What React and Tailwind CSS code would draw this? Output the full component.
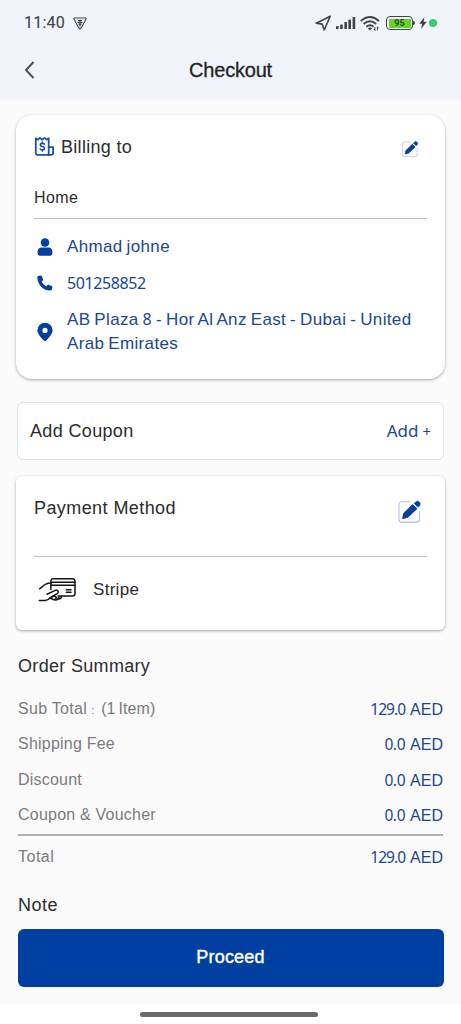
import React from "react";

const summaryRows = [
  { label: "Shipping Fee", amount: "0.0" },
  { label: "Discount", amount: "0.0" },
  { label: "Coupon & Voucher", amount: "0.0" },
];

const EditIcon = ({ className }) => (
  <svg viewBox="0 0 24 24" className={className} fill="none">
    <path
      d="M13 2.6H4.5A2.6 2.6 0 0 0 1.9 5.2V19.6A2.6 2.6 0 0 0 4.5 22.2H19A2.6 2.6 0 0 0 21.6 19.6V11.5"
      stroke="#aebfea"
      strokeWidth="1"
    />
    <path d="M5.6 18.6L6.5 14.2L15 5.7L18.7 9.3L10.2 17.4Z" fill="#0340a0" stroke="#0340a0" strokeWidth="1.2" strokeLinejoin="round" />
    <path d="M16.6 4.2L18.3 2.6Q19.8 1.4 21.5 3Q23 4.7 21.7 6.2L20.1 7.8Z" fill="#0340a0" stroke="#0340a0" strokeWidth="0.8" strokeLinejoin="round" />
  </svg>
);

const BillIcon = () => (
  <svg viewBox="0 0 20 20" className="h-[21px] w-[21px]" fill="none" stroke="#1b4fa8" strokeWidth="1.7" strokeLinejoin="round" strokeLinecap="round">
    <path d="M1.7 2.2L3.7 3.5L5.6 1.8L7.8 3.5L10 1.8L12 3.5L14 2.2V18H3.5A1.8 1.8 0 0 1 1.7 16.2Z" />
    <path d="M14 10.5H18.2V16.2A1.8 1.8 0 0 1 16.4 18H14" />
    <path d="M10 7.8Q9.4 7 7.9 7Q6 7 6 8.5Q6 9.8 7.9 10Q10 10.3 10 11.8Q10 13.2 7.9 13.2Q6.4 13.2 5.8 12.3M7.9 5.8V7M7.9 13.2V14.4" strokeWidth="1.5" />
  </svg>
);

const CardHandIcon = () => (
  <svg viewBox="0 0 38 24" className="h-6 w-[38px]" fill="none" stroke="#151515" strokeWidth="1.5" strokeLinecap="round" strokeLinejoin="round">
    <path d="M12.9 11.5V2.7A2.4 2.4 0 0 1 15.3.8H34.6A2.4 2.4 0 0 1 37 2.9V15.6A2.4 2.4 0 0 1 34.6 17.9H20" />
    <path d="M12.9 4.3H37M12.9 7.3H37M28.3 11.8H33M28.3 14.3H33" />
    <path d="M12.6 5Q8.8 5 6.3 7L1.6 10.8M1.3 22.5H7.2Q10.3 22.2 12.2 19.8L19.5 15.3Q21.3 13.5 19.4 12.3Q18.2 11.7 16.7 12.6L9 16.2" />
    <path d="M12 20L15.8 21.8Q17.8 21.8 18.5 19.5M16.4 21.8Q20 22.6 21 19.3M20.5 21Q23.6 21 23.6 18.3M13.4 19L16 17.8L18 19" />
  </svg>
);

const StatusBar = () => (
  <div className="flex h-[46px] items-center pl-6 pr-6">
    <span className="font-['Roboto',sans-serif] text-[16px] leading-5 tracking-[0.25px] text-[#414246] [-webkit-text-stroke:0.1px]">11:40</span>
    <svg viewBox="0 0 14 13" className="ml-[8px] h-[13px] w-[14px]" fill="none" stroke="#414246">
      <path d="M1.4 1H12.6Q13.4 1 13.1 2L8 11.2Q7 12.5 6 11.2L.9 2Q.6 1 1.4 1Z" strokeWidth="1.1" />
      <path d="M5 3.5H9M4.5 5.3H9.5M5.5 7.2H8.5M7 2.8V9.5" strokeWidth="1.2" />
    </svg>
    <div className="ml-auto flex items-center">
      <svg viewBox="0 0 17 16" className="h-4 w-[17px]" fill="none" stroke="#414246" strokeWidth="1.6" strokeLinejoin="round">
        <path d="M15.2 1.2L1.2 8.2L7.2 9.1L9.2 15Z" />
      </svg>
      <svg viewBox="0 0 20 12" className="ml-[4px] h-3 w-5 " fill="#414246">
        <rect x="0" y="9" width="2.6" height="3" rx=".6" />
        <rect x="4.2" y="7.5" width="2.6" height="4.5" rx=".6" />
        <rect x="8.4" y="5" width="2.6" height="7" rx=".6" />
        <rect x="12.4" y="2.5" width="2.6" height="9.5" rx=".6" />
        <rect x="16.6" y="0" width="2.6" height="12" rx=".6" />
      </svg>
      <svg viewBox="0 0 20 15" className="ml-[4px] h-[15px] w-5" fill="none" stroke="#414246" strokeWidth="1.9">
        <path d="M.8 5Q10 -3 19 5M3.6 8Q10 2.7 16.2 8M6.3 10.8Q10 7.8 13.6 10.8" />
        <path d="M7.8 12.2Q10 10.6 12.2 12.2L10 14.6Z" fill="#414246" stroke="none" />
        <path d="M15 11V14.5M17.4 10.8V14.3M14 13L15 14.5M18.4 12.2L17.4 10.8" strokeWidth="1" />
      </svg>
      <div className="ml-[6px] flex h-[14px] w-[27px] rounded-[4px] border-[1.5px] border-[#414246] p-[1.5px]">
        <span className="flex flex-1 items-center justify-center rounded-[1px] bg-[#68d22c] font-['Roboto',sans-serif] text-[9px] leading-none font-bold text-[#244d13]">95</span>
      </div>
      <span className="h-1 w-[2px] rounded-r bg-[#414246]" />
      <svg viewBox="0 0 8 12" className="ml-[4px] h-3 w-2" fill="#414246">
        <path d="M5.5 0L.2 6.8H3.2L2 12L7.8 4.8H4.6Z" />
      </svg>
      <span className="ml-[2px] h-2 w-2 rounded-full bg-[#38cb70]" />
    </div>
  </div>
);

const Amount = ({ value }) => (
  <span className="flex h-5 items-baseline text-[#1d4591]">
    <span
      className={`font-['Noto_Sans',sans-serif] text-[15.5px] leading-5 ${
        value.length > 3 ? "tracking-[-0.95px]" : "tracking-[-0.4px]"
      }`}
    >
      {value}
    </span>
    <span className="ml-[5px] text-[16px] leading-5">AED</span>
  </span>
);

const App = () => {
  return (
    <div className="flex h-[1024px] w-[461px] flex-col bg-[#fbfbfb] font-['Liberation_Sans',Arial,sans-serif] text-[#2c2c2e]">
      {/* Header */}
      <header className="h-[99px] bg-[#f1f4fa] shadow-[0_1px_2px_rgba(225,232,245,0.4)]">
        <StatusBar />
        <div className="grid h-[47px] grid-cols-[1fr_auto_1fr] items-center">
          <svg viewBox="0 0 10 18" className="ml-6 h-[18px] w-[11px]" fill="none" stroke="#505156" strokeWidth="2">
            <path d="M9 1L1.5 9L9 17" />
          </svg>
          <h1 className="text-[20px] leading-6 tracking-[-0.2px] text-[#222327] [-webkit-text-stroke:0.3px]">Checkout</h1>
        </div>
      </header>

      <main className="flex flex-1 flex-col px-4 pt-4">
        {/* Billing address */}
        <section className="h-[264px] rounded-2xl bg-white px-[18px] pt-[19px] shadow-[0_1px_3px_rgba(0,0,0,0.35)]">
          <div className="flex h-6 items-center">
            <BillIcon />
            <h2 className="mt-px ml-[6px] text-[18px] leading-6 tracking-[0.3px]">Billing to</h2>
            <button className="mt-[5px] ml-auto mr-[8px]">
              <EditIcon className="h-[18px] w-[18px]" />
            </button>
          </div>
          <p className="mt-[30px] text-[16px] leading-5 tracking-[0.4px]">Home</p>
          <hr className="mt-[10px] border-[#bfbfc1]" />
          <div className="flex flex-col text-[17px] leading-6 tracking-[0.35px] text-[#20468f] [word-spacing:-1.1px]">
            <div className="mt-4 flex items-center">
              <svg viewBox="0 0 16 18" className="ml-[3px] h-[18px] w-4" fill="#0340a0">
                <circle cx="8" cy="4.5" r="4.3" />
                <path d="M4 9.6H12Q15.4 10.2 15.4 14V15.5Q15.4 17.7 13 17.7H3Q.6 17.7 .6 15.5V14Q.6 10.2 4 9.6Z" />
              </svg>
              <span className="ml-[14px]">Ahmad johne</span>
            </div>
            <div className="mt-3 flex items-center">
              <svg viewBox="0 0 16 16" className="mb-px ml-[3px] h-4 w-4" fill="#0340a0">
                <path d="M1 1.1L3.4.5Q4.4.3 4.9 1.3L6.1 4.2Q6.4 5 5.7 5.7L4.6 6.7Q6 9.6 9.2 11.4L10.2 10.1Q10.8 9.5 11.7 9.8L14.7 11.1Q15.6 11.5 15.4 12.5L14.8 14.8Q14.5 15.6 13.5 15.6Q8 15.5 4.3 11.7Q.4 7.8.3 2.2Q.2 1.4 1 1.1Z" />
              </svg>
              <span className="ml-[14px] font-['Noto_Sans',sans-serif] text-[16px] tracking-[-0.4px]">501258852</span>
            </div>
            <div className="mt-[13px] flex items-center">
              <svg viewBox="0 0 16 20" className="ml-[3px] h-5 w-4 shrink-0" fill="#0340a0">
                <path fillRule="evenodd" d="M8 .7A7.6 7.6 0 0 0 .4 8.3C.4 12 4.4 16.2 7 18.8Q8 19.6 9 18.8C11.6 16.2 15.6 12 15.6 8.3A7.6 7.6 0 0 0 8 .7ZM8 5.8A2.6 2.6 0 1 1 8 11A2.6 2.6 0 0 1 8 5.8Z" />
              </svg>
              <p className="ml-[14px] whitespace-nowrap">
                AB Plaza <span className="font-['Noto_Sans',sans-serif] text-[16px] leading-none">8</span> - Hor Al Anz East - Dubai - United
                <br />
                Arab Emirates
              </p>
            </div>
          </div>
        </section>

        {/* Coupon */}
        <section className="mx-px mt-[23px] flex h-[58px] items-center justify-between rounded-md border border-[#dde4ed] bg-white px-3">
          <h2 className="text-[18px] leading-6 tracking-[0.35px]">Add Coupon</h2>
          <button className="flex items-baseline font-['Noto_Sans',sans-serif] text-[17px] leading-6 text-[#20468f]">
            Add<span className="ml-1 text-[15px]">+</span>
          </button>
        </section>

        {/* Payment */}
        <section className="mt-4 h-[154px] rounded-md bg-white px-[18px] pt-5 shadow-[0_1px_3px_rgba(0,0,0,0.35)]">
          <div className="flex h-6 items-center justify-between">
            <h2 className="text-[18px] leading-6 tracking-[0.42px]">Payment Method</h2>
            <button className="mt-[6px] mr-[5px]">
              <EditIcon className="h-[25px] w-[25px]" />
            </button>
          </div>
          <hr className="mt-9 border-[#c2c2c4]" />
          <div className="mt-[21px] flex items-center pl-1">
            <CardHandIcon />
            <span className="ml-[17px] text-[17px] leading-6 tracking-[0.3px]">Stripe</span>
          </div>
        </section>

        {/* Order summary */}
        <section className="mt-6 px-[2px] text-[16px] leading-5 text-[#7b7b7d]">
          <h2 className="text-[18px] leading-6 tracking-[0.32px] text-[#2c2c2e]">Order Summary</h2>
          <div className="mt-[21px] flex h-5 items-center justify-between">
            <span className="flex items-baseline">
              <span className="tracking-[0.3px]">Sub Total</span>
              <span className="ml-[4px] text-[11px]">:</span>
              <span className="ml-[7px]">(1</span>
              <span className="ml-[3px] tracking-[0.1px]">Item)</span>
            </span>
            <Amount value="129.0" />
          </div>
          {summaryRows.map((row) => (
            <div key={row.label} className="mt-[15.3px] flex h-5 items-center justify-between">
              <span className="tracking-[0.22px]">{row.label}</span>
              <Amount value={row.amount} />
            </div>
          ))}
          <div className="mt-[9px] h-[2px] bg-[#b2b2b3]" />
          <div className="mt-[11px] flex h-5 items-center justify-between">
            <span className="tracking-[0.5px]">Total</span>
            <Amount value="129.0" />
          </div>
        </section>

        <h2 className="mt-[26px] pl-[2px] text-[18px] leading-6 tracking-[0.5px]">Note</h2>
        <button className="mx-[1.5px] mt-[12px] h-[58px] shrink-0 rounded-md bg-[#003fa2] text-[18px] tracking-[0.2px] text-white [-webkit-text-stroke:0.4px]">
          Proceed
        </button>
      </main>

      {/* Gesture bar */}
      <footer className="flex h-5 items-center justify-center bg-white pr-[3px]">
        <div className="h-[5px] w-[178px] rounded-full bg-[#6a6a6c]" />
      </footer>
    </div>
  );
};

export default App;
